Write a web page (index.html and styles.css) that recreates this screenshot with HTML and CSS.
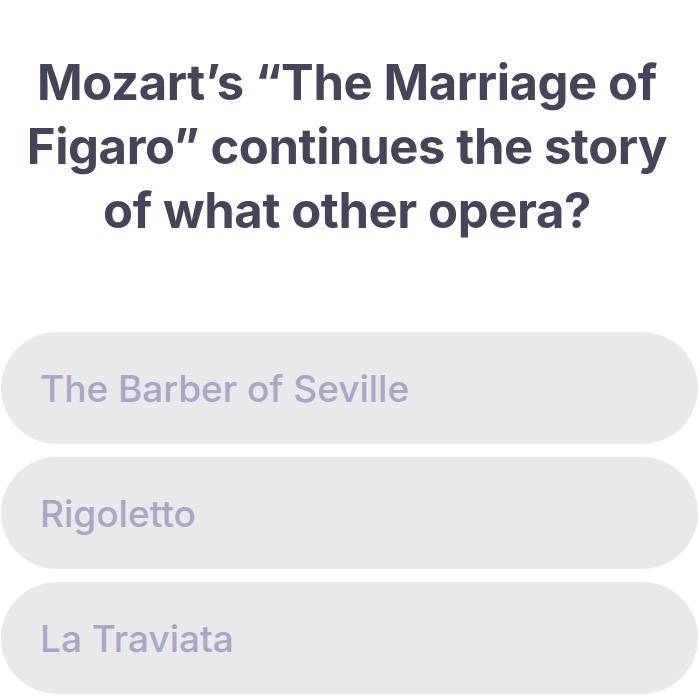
FILE: index.html
```html
<!DOCTYPE html>
<html>
<head>
<meta charset="utf-8">
<link rel="stylesheet" href="styles.css">
</head>
<body>
<main class="quiz">
  <h1 class="question">Mozart’s “The Marriage of Figaro” continues the story of what other opera?</h1>
  <div class="options">
    <div class="option">The Barber of Seville</div>
    <div class="option">Rigoletto</div>
    <div class="option">La Traviata</div>
  </div>
</main>
</body>
</html>
```
FILE: styles.css
```css
html, body {
  margin: 0;
  padding: 0;
  background: #ffffff;
}
.quiz {
  width: 700px;
  font-family: Inter, "Noto Sans", sans-serif;
}
.question {
  margin: 0;
  padding: 51px 22px 0 16px;
  text-align: center;
  font-size: 49px;
  line-height: 64px;
  font-weight: 700;
  color: #45455a;
  letter-spacing: -0.4px;
}
.options {
  display: flex;
  flex-direction: column;
  gap: 13px;
  margin-top: 89px;
  padding: 0 2px 0 1px;
}
.option {
  height: 112px;
  border-radius: 56px;
  background: #e9e8ea;
  display: flex;
  align-items: center;
  padding-left: 39px;
  font-size: 37px;
  font-weight: 500;
  color: #a9a6c6;
}
```
